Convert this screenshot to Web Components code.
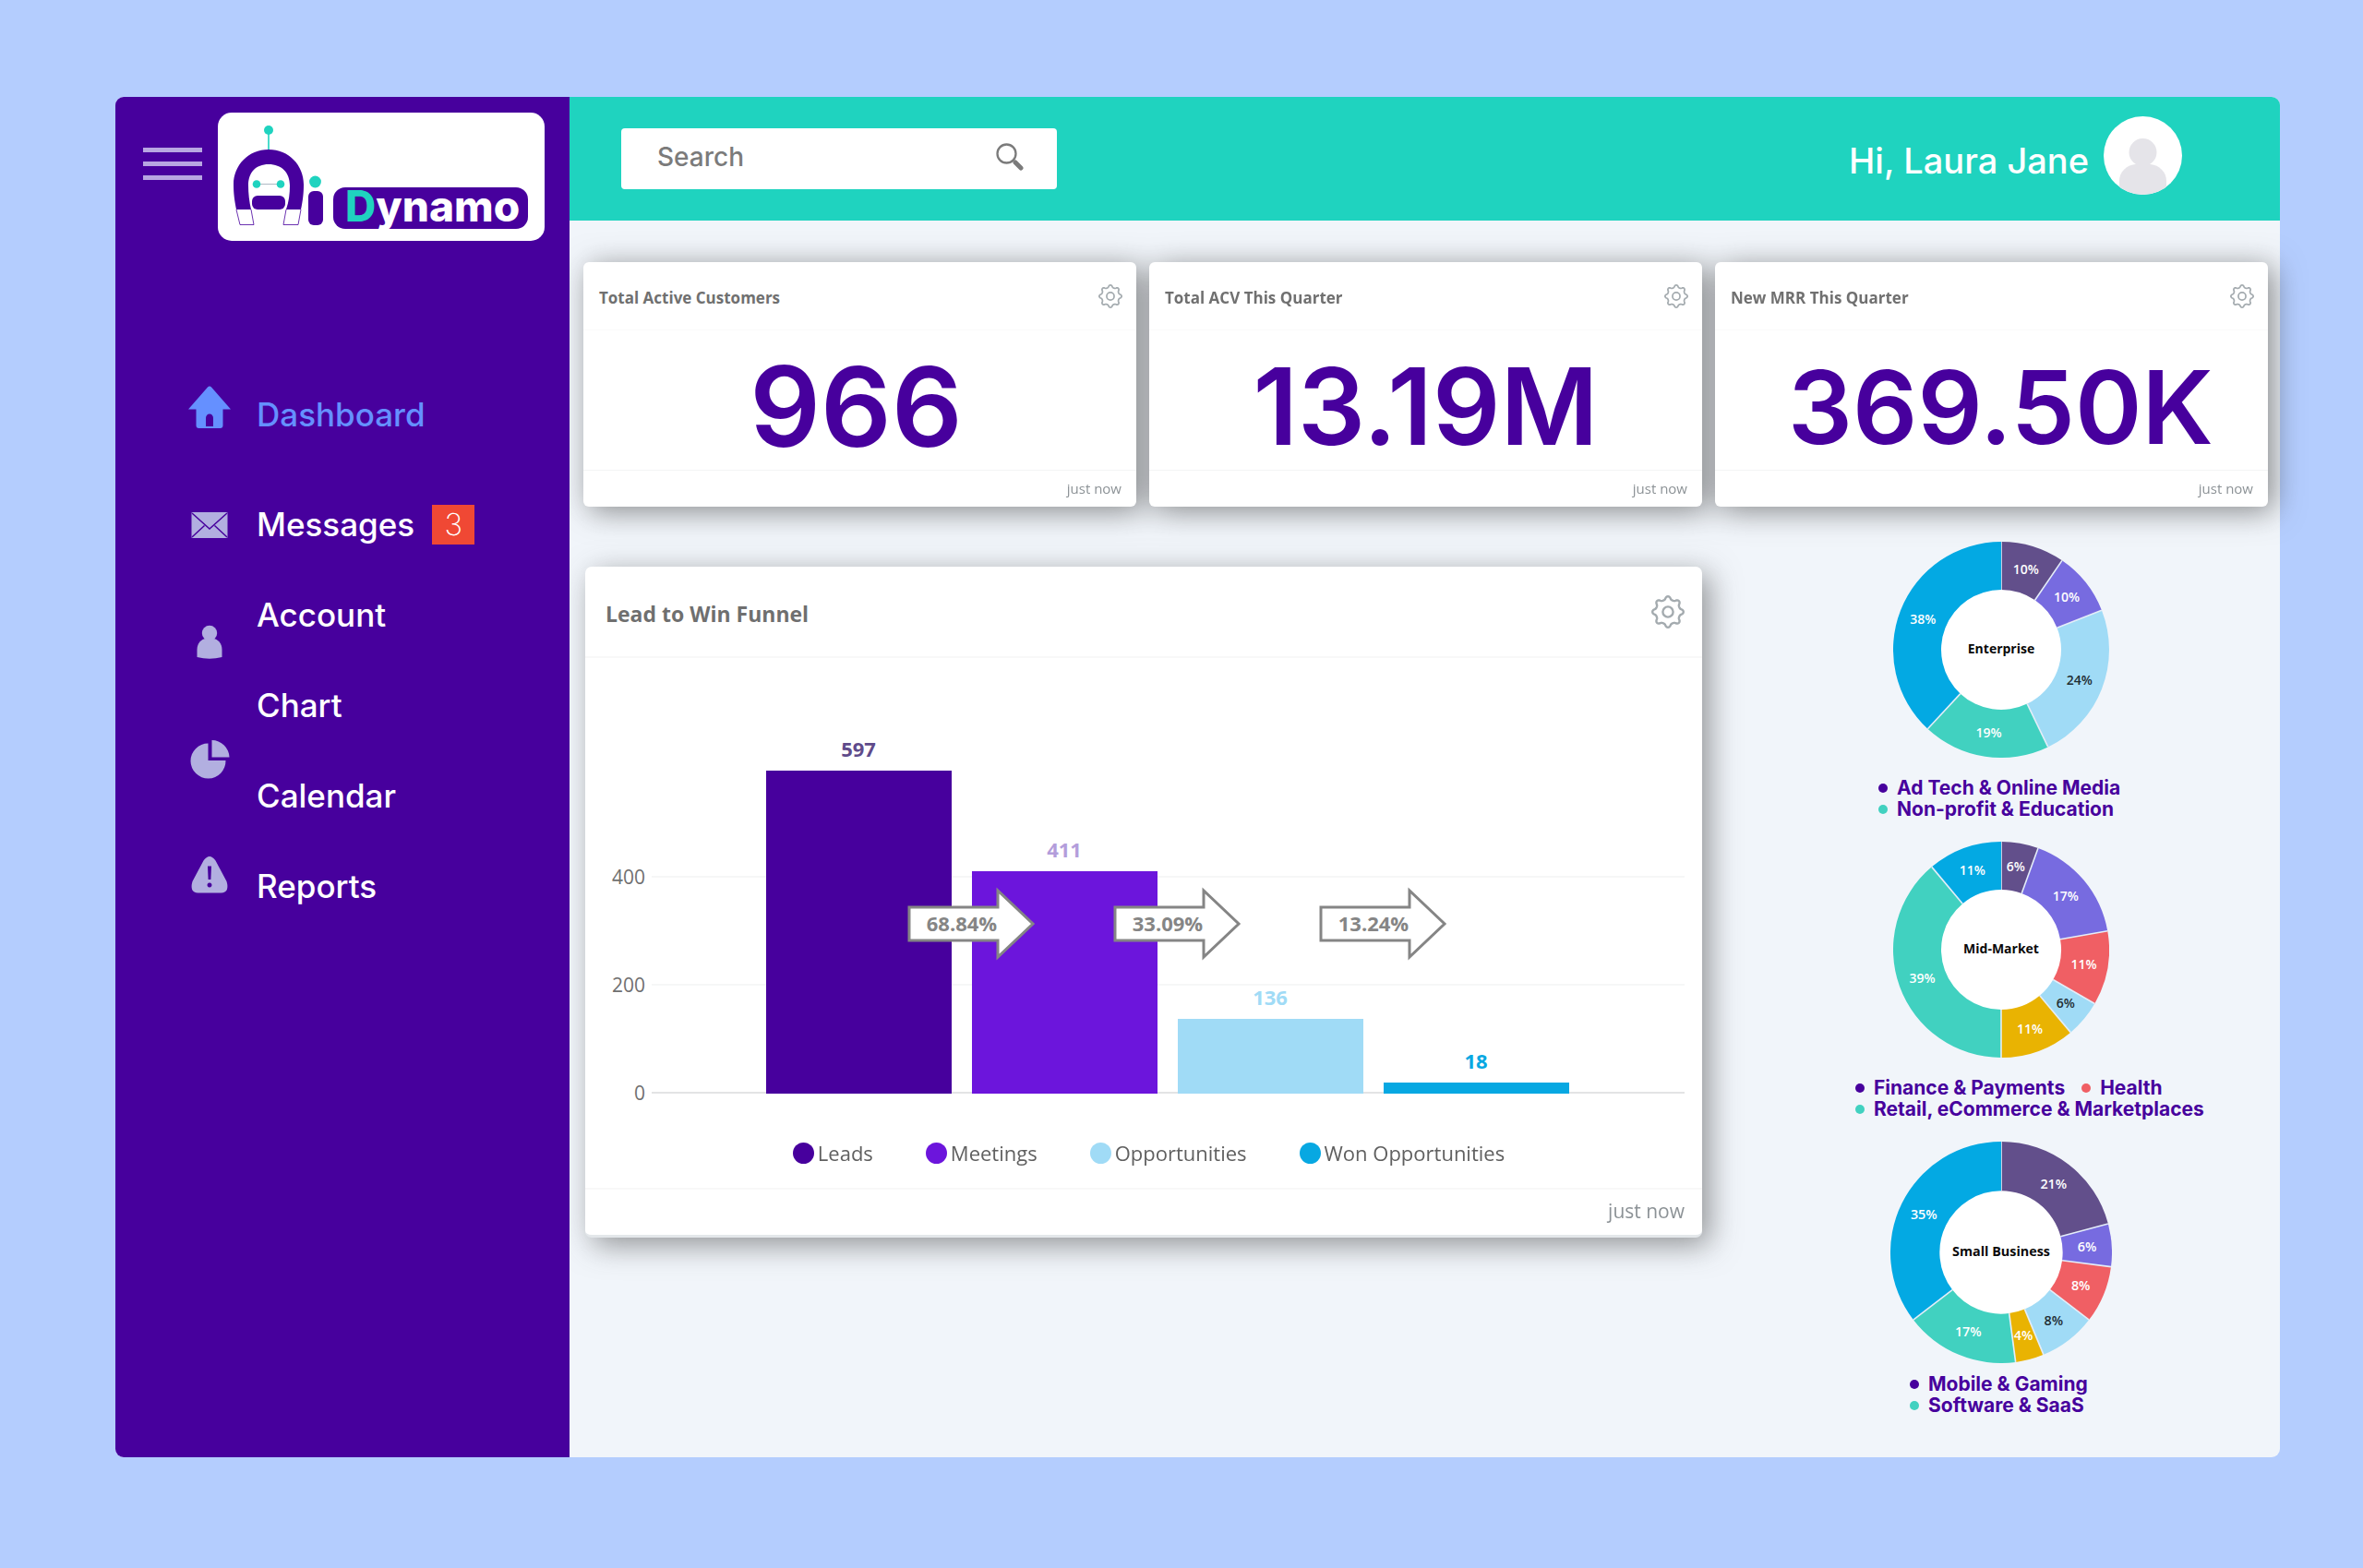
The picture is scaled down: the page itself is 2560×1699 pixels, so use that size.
<!DOCTYPE html>
<html lang="en">
<head>
<meta charset="utf-8">
<meta name="viewport" content="width=device-width, initial-scale=1">
<title>Ai Dynamo Dashboard</title>
<style>
  :root {
    --brand: #47009d;
    --teal: #1fd3bf;
    --surface: #f1f5fa;
    --backdrop: #b4cdfe;
    --ui: Inter, "Liberation Sans", sans-serif;
    --data: "Open Sans", "Noto Sans", sans-serif;
  }
  * { box-sizing: border-box; }
  body {
    margin: 0;
    min-height: 100vh;
    display: flex;
    padding: 105px 90px 120px 125px;
    background: var(--backdrop);
    font-family: var(--ui);
  }
  dash-app { flex: 1; }
</style>
</head>
<body>
<dash-app>
  <dash-sidebar slot="sidebar"></dash-sidebar>
  <dash-header slot="header" name="Laura Jane"></dash-header>
  <kpi-row slot="kpis">
    <kpi-card heading="Total Active Customers" size="xl">966</kpi-card>
    <kpi-card heading="Total ACV This Quarter" size="lg">13.19M</kpi-card>
    <kpi-card heading="New MRR This Quarter" size="md">369.50K</kpi-card>
  </kpi-row>
  <funnel-card slot="funnel"></funnel-card>
  <donut-chart slot="side" heading="Enterprise" data-parts="2 plum,2 violet,5 sky,4 teal,8 blue">
    <donut-key color="#47009d">Ad Tech &amp; Online Media</donut-key>
    <donut-key color="#41d1c0">Non-profit &amp; Education</donut-key>
  </donut-chart>
  <donut-chart slot="side" class="wide" heading="Mid-Market" data-parts="1 plum,3 violet,2 red,1 sky,2 gold,7 teal,2 blue">
    <donut-key color="#47009d">Finance &amp; Payments</donut-key>
    <donut-key color="#f05f64">Health</donut-key>
    <donut-key color="#41d1c0">Retail, eCommerce &amp; Marketplaces</donut-key>
  </donut-chart>
  <donut-chart slot="side" class="large" heading="Small Business" data-parts="10 plum,3 violet,4 red,4 sky,2 gold,8 teal,17 blue">
    <donut-key color="#47009d">Mobile &amp; Gaming</donut-key>
    <donut-key color="#41d1c0">Software &amp; SaaS</donut-key>
  </donut-chart>
</dash-app>

<script>
const reset = '*{box-sizing:border-box}[hidden]{display:none}';
const define = (name, render) => customElements.define(name, class extends HTMLElement {
  connectedCallback() {
    if (this.shadowRoot) return;
    this.attachShadow({ mode: 'open' }).innerHTML = render(this);
  }
});

/* Eight-lobed settings gear */
function gearPath(c, r, a) {
  let d = '';
  for (let i = 0; i < 128; i++) {
    const t = i / 128 * Math.PI * 2;
    const w = Math.cos(8 * t);
    const q = r + a * (w > 0 ? Math.pow(w, .8) : -Math.pow(-w, .5) * .6);
    d += (i ? 'L' : 'M') + (c + q * Math.sin(t)).toFixed(2) + ' ' + (c - q * Math.cos(t)).toFixed(2);
  }
  return d + 'Z';
}

define('gear-button', () => `
  <style>${reset}
    :host{display:block;width:var(--gear,26px);height:var(--gear,26px)}
    button{display:block;width:100%;height:100%;padding:0;border:0;background:none;cursor:pointer}
    svg{display:block;width:100%;height:100%}
  </style>
  <button type="button" aria-label="Settings">
    <svg viewBox="0 0 36 36" fill="none" stroke="#a4abaf" stroke-width="2.4" stroke-linejoin="round">
      <path d="${gearPath(18, 14.6, 2.2)}"/><circle cx="18" cy="18" r="5.6"/>
    </svg>
  </button>`);

define('dash-app', () => `
  <style>${reset}
    :host{display:grid;grid-template-columns:492px 1fr;border-radius:9px;background:var(--surface)}
    aside{display:grid;position:relative;z-index:1}
    .page{display:flex;flex-direction:column;min-width:0}
    main{flex:1;display:flex;flex-direction:column;gap:38px;padding:45px 13px 0 15px}
    .split{display:grid;grid-template-columns:1212fr 578fr;gap:35px;align-items:start}
    .side{display:flex;flex-direction:column;align-items:center;gap:24px}
    .lead{padding:27px 0 0 2px}
  </style>
  <aside><slot name="sidebar"></slot></aside>
  <div class="page">
    <slot name="header"></slot>
    <main>
      <slot name="kpis"></slot>
      <div class="split">
        <div class="lead"><slot name="funnel"></slot></div>
        <div class="side"><slot name="side"></slot></div>
      </div>
    </main>
  </div>`);

define('dash-logo', () => `
  <style>${reset}
    :host{display:block;width:354px;height:139px;background:#fff;border-radius:15px}
    svg{display:block;width:100%;height:100%}
    text{font:800 46px Inter,"Liberation Sans",sans-serif}
  </style>
  <svg viewBox="0 0 354 139" role="img" aria-label="Ai Dynamo">
    <path d="M55 23V41" stroke="#1fd3bf" stroke-width="1.6"/>
    <circle cx="55" cy="19" r="5" fill="#1fd3bf"/>
    <path d="M20 105C18 95 17 88 17 78C17 57 33 40 55 40C77 40 93 57 93 78C93 88 92 95 90 105H74C77 96 78 88 78 79C78 65 69 56 55 56C41 56 33 65 33 79C33 88 34 96 36 105Z" fill="#47009d"/>
    <path d="M20 105L24 121.500H39L36 105M90 105L87 121.500H71L74 105" fill="#fff" stroke="#47009d" stroke-width=".8"/>
    <path d="M42 77.500H68" stroke="#9aa7b5" stroke-width=".8"/>
    <circle cx="42" cy="77.500" r="4.300" fill="#1fd3bf"/><circle cx="68" cy="77.500" r="4.300" fill="#1fd3bf"/>
    <rect x="37" y="90" width="36" height="15" rx="6" fill="#47009d"/>
    <circle cx="105.500" cy="75" r="6.400" fill="#1fd3bf"/>
    <rect x="98" y="85" width="16" height="37" rx="6" fill="#47009d"/>
    <rect x="125" y="81" width="211" height="45" rx="13" fill="#47009d"/>
    <text x="138" y="118" fill="#fff"><tspan fill="#1fd3bf">D</tspan>ynamo</text>
  </svg>`);

define('dash-sidebar', () => `
  <style>${reset}
    :host{display:block;background:var(--brand);border-radius:9px 0 0 9px;padding-top:17px}
    .top{display:flex;gap:17px;padding-left:30px;align-items:flex-start}
    .menu{display:flex;flex-direction:column;gap:10px;width:64px;margin-top:38px;padding:0;border:0;background:none;cursor:pointer}
    .menu i{height:5px;background:#b8a6e2}
    nav{display:flex;gap:27px;padding-left:78px;margin-top:117px}
    .icons{display:flex;flex-direction:column}
    .icons svg{width:48px;height:127px;display:block;fill:#b2afe0}
    .icons svg.on{fill:#6590ff}
    ul{list-style:none;margin:0;padding:22px 0 0;display:flex;flex-direction:column}
    li{display:flex;align-items:center;gap:19px;height:98px}
    li:first-child{margin-bottom:21px}
    a{color:#fff;text-decoration:none;font-size:35px;font-weight:500;line-height:40px}
    a[aria-current]{color:#6590ff}
    .badge{width:46px;height:43px;background:#f04834;color:#fff;font-size:33px;font-weight:200;line-height:43px;text-align:center}
  </style>
  <div class="top">
    <button class="menu" type="button" aria-label="Menu"><i></i><i></i><i></i></button>
    <dash-logo></dash-logo>
  </div>
  <nav>
    <div class="icons" aria-hidden="true">
      <svg class="on" viewBox="0 0 48 127"><path fill-rule="evenodd" d="M22 41.500Q24 39.500 26 41.500L47 65.500H38.500V83Q38.500 86 35.500 86H12.500Q9.500 86 9.500 83V65.500H1ZM20 84H28V75A4 4.500 0 0 0 20 75Z"/></svg>
      <svg viewBox="0 0 48 127"><rect x="4.500" y="50" width="39" height="28" rx="1"/><path d="M5 51L24 68L43 51M5 77L18.500 64.500M43 77L29.500 64.500" fill="none" stroke="#47009d" stroke-width="1.500"/></svg>
      <svg viewBox="0 0 48 127"><circle cx="24" cy="54" r="8.200"/><path d="M10.500 80V72C10.500 65 15 60.500 20 60H28C33 60.500 37.500 65 37.500 72V80Q24 83.500 10.500 80Z"/></svg>
      <svg viewBox="0 0 48 127"><path d="M22.500 46.500V65H41.500A19 19 0 1 1 22.500 46.500ZM26.500 43A19 19 0 0 1 45.500 61.500H26.500Z"/></svg>
      <svg viewBox="0 0 48 127"><path fill-rule="evenodd" d="M17.500 46.500Q24 37.500 30.500 46.500L42.500 69Q46 81 36.500 81.500H11.500Q2 81 5.500 69ZM22 52.500L22.600 67H25.400L26 52.500ZM24 70.500A2.500 2.500 0 1 0 24.010 70.500Z"/></svg>
    </div>
    <ul>
      <li><a href="#dashboard" aria-current="page">Dashboard</a></li>
      <li><a href="#messages">Messages</a><span class="badge">3</span></li>
      <li><a href="#account">Account</a></li>
      <li><a href="#chart">Chart</a></li>
      <li><a href="#calendar">Calendar</a></li>
      <li><a href="#reports">Reports</a></li>
    </ul>
  </nav>`);

define('dash-header', el => `
  <style>${reset}
    :host{display:flex;align-items:center;justify-content:space-between;height:134px;padding:0 106px 0 56px;background:var(--teal);border-radius:0 9px 0 0}
    form{display:flex;align-items:center;width:472px;height:66px;padding:0 36px 4px 39px;background:#fff;border-radius:4px}
    input{flex:1;min-width:0;border:0;padding:0;outline:0;background:none;color:#7b7b7b;font:500 28px var(--ui)}
    input::placeholder{color:#7b7b7b;opacity:1}
    form button{width:30px;height:30px;padding:0;border:0;background:none}
    form svg,.avatar{display:block}
    .user{display:flex;align-items:center;gap:16px;padding-top:4px;color:#fff;font-size:38px;font-weight:500;line-height:44px}
    .avatar{width:85px;height:85px;margin-bottom:11px}
  </style>
  <form role="search">
    <input type="search" aria-label="Search" placeholder="Search">
    <button type="submit" aria-label="Search">
      <svg width="30" height="30" viewBox="0 0 30 30" fill="none" stroke="#7b7b7b"><circle cx="11.500" cy="11.500" r="10" stroke-width="2.300"/><path d="M21 21L27 27" stroke-width="5" stroke-linecap="round"/></svg>
    </button>
  </form>
  <div class="user">
    <span>Hi, ${el.getAttribute('name')}</span>
    <svg class="avatar" viewBox="0 0 85 85" role="img" aria-label="Profile picture">
      <clipPath id="c"><circle cx="42.500" cy="42.500" r="42.500"/></clipPath>
      <g clip-path="url(#c)"><rect width="85" height="85" fill="#fff"/><g fill="#e5e4e9"><circle cx="42.500" cy="39" r="15"/><path d="M17 85V70C17 60 25 53 34 52H51C60 53 68 60 68 70V85Z"/></g></g>
    </svg>
  </div>`);

define('kpi-row', () => `
  <style>${reset}
    :host{display:grid;grid-template-columns:repeat(3,1fr);gap:14px;filter:drop-shadow(6px 5px 16px rgba(50,50,50,.55))}
  </style><slot></slot>`);

define('kpi-card', el => `
  <style>${reset}
    :host{display:flex;flex-direction:column;height:265px;background:#fff;border-radius:6px;font-family:var(--data)}
    header{display:flex;align-items:center;justify-content:space-between;height:74px;padding:0 15px 0 17px;border-bottom:1px solid #fafafa}
    h2{margin:0;padding-top:4px;font-size:17px;line-height:26px;font-weight:700;color:#707070}
    .value{flex:1;display:flex;align-items:center;justify-content:center;padding:14px 8px 0 0;color:var(--brand);font-family:var(--ui);font-weight:600;line-height:120px;font-size:120px}
    :host([size="lg"]) .value{font-size:115px;padding-right:0}
    :host([size="md"]) .value{font-size:110px;padding:14px 0 0 20px}
    footer{height:40px;padding:0 16px;border-top:1px solid #f3f4f5;text-align:right;font-size:15px;line-height:38px;color:#8c9296}
  </style>
  <header><h2>${el.getAttribute('heading')}</h2><gear-button></gear-button></header>
  <div class="value"><slot></slot></div>
  <footer>just now</footer>`);

define('funnel-card', () => {
  const bars = [
    [597, '#47009d', '#5f4b8b'], [411, '#6c15dc', '#b39ddb'],
    [136, '#a0dbf6', '#a0dbf6'], [18, '#07a8e2', '#07a8e2']
  ];
  const base = 471, unit = 117 / 200;
  const grid = [400, 200, 0].map(v => {
    const y = base - v * unit;
    return `<path d="M72 ${Math.round(y)}H1191" stroke="${v ? '#f6f7f7' : '#e3e4e5'}" stroke-width="2"/><text class="axis" x="65" y="${Math.round(y) + 8}" text-anchor="end">${v}</text>`;
  }).join('');
  const cols = bars.map(([v, f, t], i) => {
    const x = 196 + i * 223, h = Math.round(v * unit);
    return `<rect x="${x}" y="${base - h}" width="201" height="${h + 1}" fill="${f}"/><text class="val" x="${x + 100}" y="${base - h - 15}" fill="${t}" text-anchor="middle">${v}</text>`;
  }).join('');
  const arrows = ['68.84%', '33.09%', '13.24%'].map((p, i) => {
    const x = 351 + i * 223;
    return `<path d="M${x} 270H${x + 96}V252L${x + 134} 288L${x + 96} 324V306H${x}Z" fill="#fff" stroke="#858585" stroke-width="3"/><text class="val" x="${x + 57}" y="296" fill="#858585" text-anchor="middle">${p}</text>`;
  }).join('');
  return `
  <style>${reset}
    :host{display:flex;flex-direction:column;background:#fff;border-radius:7px;border-bottom:3px solid #e3e7ea;font-family:var(--data);filter:drop-shadow(8px 8px 16px rgba(50,50,50,.5))}
    header{display:flex;align-items:center;justify-content:space-between;height:99px;padding:0 19px 0 22px;border-bottom:2px solid #f8f8f8;--gear:36px}
    h2{margin:0;padding-top:5px;font-size:23px;line-height:32px;font-weight:700;color:#6f6f6f}
    svg{display:block;width:100%}
    text{font-family:"Open Sans","Noto Sans",sans-serif;font-size:22px}
    .axis{fill:#707070;font-weight:500;font-size:21px}
    .val{font-weight:700}
    ul{display:flex;justify-content:center;gap:57px;height:76px;margin:0;padding:0 0 0 11px;list-style:none;color:#606060;font-size:22px;line-height:76px}
    li{display:flex;align-items:center;gap:4px}
    li::before{content:"";width:23px;height:23px;border-radius:50%;background:var(--c)}
    footer{height:51px;padding:0 19px;border-top:2px solid #f8f8f8;text-align:right;color:#8c9296;font-size:21px;line-height:46px}
  </style>
  <header><h2>Lead to Win Funnel</h2><gear-button></gear-button></header>
  <svg viewBox="0 0 1210 498" role="img" aria-label="Lead to win funnel">${grid}${cols}${arrows}</svg>
  <ul>
    <li style="--c:#47009d">Leads</li><li style="--c:#6c15dc">Meetings</li>
    <li style="--c:#a0dbf6">Opportunities</li><li style="--c:#07a8e2">Won Opportunities</li>
  </ul>
  <footer>just now</footer>`;
});

const palette = { plum: '#624f8b', violet: '#776be0', red: '#f05f64', sky: '#a0dbf6', gold: '#e9b302', teal: '#41d1c0', blue: '#03a9e3' };

define('donut-chart', el => {
  const parts = el.dataset.parts.split(',').map(p => p.split(' '));
  const total = parts.reduce((s, p) => s + +p[0], 0);
  const at = (t, r) => (117 + r * Math.sin(t)).toFixed(2) + ' ' + (117 - r * Math.cos(t)).toFixed(2);
  let a = 0, arcs = '', labels = '';
  for (const [n, c] of parts) {
    const b = a + n / total * Math.PI * 2, m = (a + b) / 2, big = b - a > Math.PI ? 1 : 0;
    arcs += `<path d="M${at(a, 117)}A117 117 0 ${big} 1 ${at(b, 117)}L${at(b, 65)}A65 65 0 ${big} 0 ${at(a, 65)}Z" fill="${palette[c]}"/><path d="M${at(a, 65)}L${at(a, 117)}" stroke="#e4edf8" stroke-width="1.600"/>`;
    const [x, y] = at(m, 91).split(' ');
    labels += `<text x="${x}" y="${+y + 5}" fill="${c === 'sky' ? '#1f2d33' : '#fff'}">${Math.round(n / total * 100)}%</text>`;
    a = b;
  }
  return `
  <style>${reset}
    :host{display:flex;flex-direction:column;align-items:center;gap:21px;--d:234px}
    :host(.large){--d:240px;gap:11px}
    svg{display:block;width:var(--d);height:var(--d)}
    text{font:600 14px "Open Sans","Noto Sans",sans-serif;text-anchor:middle}
    .name{font-weight:700;fill:#0a0a0a}
    .keys{display:flex;flex-wrap:wrap;column-gap:18px;max-width:266px}
    :host(.wide) .keys{max-width:384px;margin-left:68px}
    :host(.large) .keys{max-width:198px}
  </style>
  <svg viewBox="0 0 234 234" role="img" aria-label="${el.getAttribute('heading')}">
    <circle cx="117" cy="117" r="66" fill="#fff"/>${arcs}${labels}
    <text class="name" x="117" y="121">${el.getAttribute('heading')}</text>
  </svg>
  <div class="keys"><slot></slot></div>`;
});

define('donut-key', el => `
  <style>${reset}
    :host{display:flex;align-items:center;gap:10px;white-space:nowrap;color:var(--brand);font-size:21px;font-weight:700;line-height:23px}
    i{width:10px;height:10px;border-radius:50%;background:${el.getAttribute('color')}}
  </style><i></i><slot></slot>`);
</script>
</body>
</html>
